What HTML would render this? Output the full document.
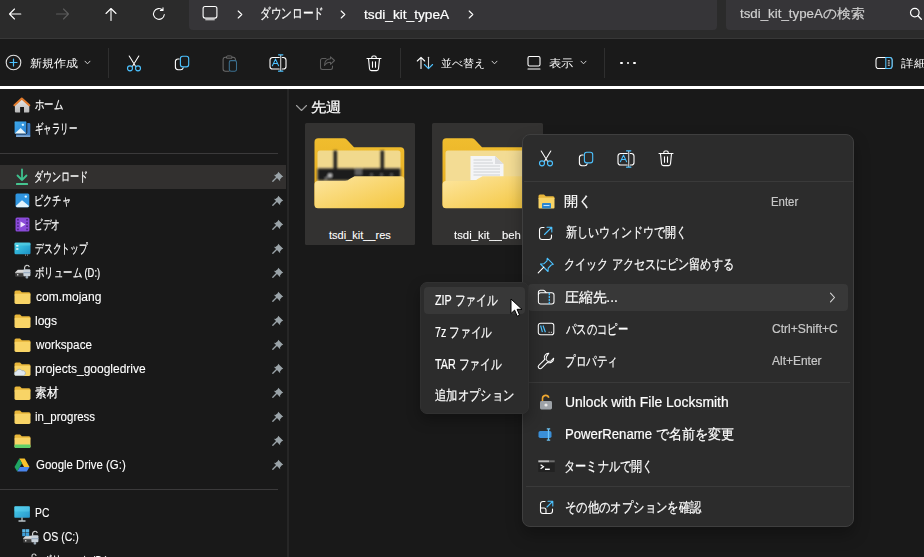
<!DOCTYPE html>
<html lang="ja"><head><meta charset="utf-8"><title>Explorer</title>
<style>
html,body{margin:0;padding:0;}
body{width:924px;height:557px;overflow:hidden;position:relative;background:#191919;font-family:"Liberation Sans",sans-serif;}
.b,.i,.t{position:absolute;}
.i{overflow:visible;}
.t{line-height:1;white-space:pre;transform-origin:0 0;}
</style></head><body>
<div class="b" style="left:0px;top:0px;width:924px;height:38px;background:#2b2b2b;"></div><div class="b" style="left:0px;top:38px;width:924px;height:1px;background:#383838;"></div><div class="b" style="left:188.5px;top:-6px;width:528px;height:36px;background:#363538;border-radius:4px"></div><div class="b" style="left:725.5px;top:-6px;width:220px;height:36px;background:#363538;border-radius:4px"></div><svg class="i" style="left:8px;top:7px;" width="14" height="14" viewBox="0 0 14 14"><path d="M12.8 7H1.5M6.5 2L1.5 7L6.5 12" stroke="#ffffff" stroke-width="1.1" fill="none" stroke-linecap="round" stroke-linejoin="round"/></svg><svg class="i" style="left:56px;top:7px;" width="14" height="14" viewBox="0 0 14 14"><path d="M0.5 7H12.5M7.5 2L12.5 7L7.5 12" stroke="#5c5c5c" stroke-width="1.1" fill="none" stroke-linecap="round" stroke-linejoin="round"/></svg><svg class="i" style="left:104px;top:7px;" width="14" height="14" viewBox="0 0 14 14"><path d="M7 13.5V1.5M2 6.5L7 1.5L12 6.5" stroke="#ffffff" stroke-width="1.1" fill="none" stroke-linecap="round" stroke-linejoin="round"/></svg><svg class="i" style="left:152px;top:7px;" width="14" height="14" viewBox="0 0 14 14"><path d="M12.3 7.5A5.4 5.4 0 1 1 10.6 3M11 0.8V3.4H8.4" stroke="#ffffff" stroke-width="1.1" fill="none" stroke-linecap="round" stroke-linejoin="round"/></svg><svg class="i" style="left:201px;top:5px;" width="18" height="17" viewBox="0 0 18 17"><rect x="2.1" y="1.5" width="13.8" height="11.6" rx="2" stroke="#ffffff" stroke-width="1.1" fill="none"/><path d="M4.3 14.2H13.7V15.3H4.3Z" fill="#ffffff" opacity="0.85"/></svg><svg class="i" style="left:237px;top:9.5px;" width="6" height="9" viewBox="0 0 6 9"><path d="M1.2 1L4.8 4.5L1.2 8" stroke="#ffffff" stroke-width="1.1" fill="none" stroke-linecap="round" stroke-linejoin="round"/></svg><svg class="i" style="left:339.5px;top:9.5px;" width="6" height="9" viewBox="0 0 6 9"><path d="M1.2 1L4.8 4.5L1.2 8" stroke="#ffffff" stroke-width="1.1" fill="none" stroke-linecap="round" stroke-linejoin="round"/></svg><svg class="i" style="left:467.5px;top:9.5px;" width="6" height="9" viewBox="0 0 6 9"><path d="M1.2 1L4.8 4.5L1.2 8" stroke="#ffffff" stroke-width="1.1" fill="none" stroke-linecap="round" stroke-linejoin="round"/></svg><svg class="i" style="left:909px;top:7px;" width="14" height="14" viewBox="0 0 14 14"><circle cx="5.8" cy="5.6" r="4.3" stroke="#ffffff" stroke-width="1.2" fill="none"/><path d="M8.9 8.8L12.3 12.2" stroke="#ffffff" stroke-width="1.3" fill="none" stroke-linecap="round" stroke-linejoin="round"/></svg><div class="b" style="left:0px;top:39px;width:924px;height:47px;background:#1a1a1a;"></div><div class="b" style="left:0px;top:86px;width:924px;height:3px;background:#ffffff;"></div><svg class="i" style="left:5px;top:54px;" width="17" height="17" viewBox="0 0 17 17"><circle cx="8.5" cy="8.5" r="7.3" stroke="#e0e0e0" stroke-width="1.1" fill="none"/><path d="M8.5 5V12M5 8.5H12" stroke="#4cc2ff" stroke-width="1.2" fill="none" stroke-linecap="round" stroke-linejoin="round"/></svg><svg class="i" style="left:83.5px;top:60.3px;" width="7" height="5" viewBox="0 0 7 5"><path d="M1 1.2L3.5 3.8L6 1.2" stroke="#cfcfcf" stroke-width="1" fill="none" stroke-linecap="round" stroke-linejoin="round"/></svg><svg class="i" style="left:491.0px;top:60.3px;" width="7" height="5" viewBox="0 0 7 5"><path d="M1 1.2L3.5 3.8L6 1.2" stroke="#cfcfcf" stroke-width="1" fill="none" stroke-linecap="round" stroke-linejoin="round"/></svg><svg class="i" style="left:579.5px;top:60.3px;" width="7" height="5" viewBox="0 0 7 5"><path d="M1 1.2L3.5 3.8L6 1.2" stroke="#cfcfcf" stroke-width="1" fill="none" stroke-linecap="round" stroke-linejoin="round"/></svg><div class="b" style="left:108px;top:48px;width:1px;height:30px;background:#2f2f2f;"></div><div class="b" style="left:400px;top:48px;width:1px;height:30px;background:#2f2f2f;"></div><div class="b" style="left:603.5px;top:48px;width:1px;height:30px;background:#2f2f2f;"></div><svg class="i" style="left:126px;top:55px;" width="16" height="17" viewBox="0 0 16 17"><path d="M3.2 1L9.5 11.3M12.8 1L6.5 11.3" stroke="#ffffff" stroke-width="1.05" fill="none" stroke-linecap="round" stroke-linejoin="round"/><circle cx="4" cy="13.3" r="2.5" stroke="#4cc2ff" stroke-width="1.15" fill="none"/><circle cx="12" cy="13.3" r="2.5" stroke="#4cc2ff" stroke-width="1.15" fill="none"/></svg><svg class="i" style="left:174px;top:54px;" width="16" height="17" viewBox="0 0 16 17"><path d="M5.2 5H4A2.6 2.6 0 0 0 1.4 7.6V13.1A2.6 2.6 0 0 0 4 15.7H6.8A2.5 2.5 0 0 0 9.2 13.9" stroke="#ffffff" stroke-width="1.1" fill="none" stroke-linecap="round" stroke-linejoin="round"/><rect x="6.4" y="2.2" width="8.3" height="10.7" rx="2.3" stroke="#4cc2ff" stroke-width="1.1" fill="none"/></svg><svg class="i" style="left:222px;top:54.5px;" width="16" height="18" viewBox="0 0 16 18"><path d="M4.5 2.2H3.3A2.2 2.2 0 0 0 1.1 4.4V14A2.2 2.2 0 0 0 3.3 16.2H7" stroke="#6a6a6a" stroke-width="1.05" fill="none" stroke-linecap="round" stroke-linejoin="round"/><path d="M4.5 3.2V2A1.2 1.2 0 0 1 5.7 0.9H8.8A1.2 1.2 0 0 1 10 2V3.2Z" stroke="#6a6a6a" stroke-width="1" fill="none"/><path d="M10 2.2H11.2A2.2 2.2 0 0 1 13.4 4.4V5.5" stroke="#6a6a6a" stroke-width="1.05" fill="none" stroke-linecap="round" stroke-linejoin="round"/><rect x="7.3" y="5.6" width="7.2" height="10.6" rx="1.6" stroke="#3b6f8f" stroke-width="1.05" fill="none"/></svg><svg class="i" style="left:269px;top:53px;" width="18" height="20" viewBox="0 0 18 20"><path d="M10.3 4.5H3.6A2.6 2.6 0 0 0 1 7.1V13.4A2.6 2.6 0 0 0 3.6 16H10.3M13.2 4.5H14.4A2.6 2.6 0 0 1 17 7.1V13.4A2.6 2.6 0 0 1 14.4 16H13.2" stroke="#ffffff" stroke-width="1.1" fill="none" stroke-linecap="round" stroke-linejoin="round"/><path d="M11.7 2V18" stroke="#d0d0d0" stroke-width="1.1"/><path d="M9.6 1.8H13.8M9.6 18.2H13.8" stroke="#4cc2ff" stroke-width="1.3" stroke-linecap="round"/><path d="M3.4 12.7L6.5 6.1L9.6 12.7M4.6 10.5H8.4" stroke="#4cc2ff" stroke-width="1.05" fill="none" stroke-linecap="round" stroke-linejoin="round"/></svg><svg class="i" style="left:318.5px;top:55px;" width="17" height="16" viewBox="0 0 17 16"><path d="M7 3.5H3.5A2 2 0 0 0 1.5 5.5V12.5A2 2 0 0 0 3.5 14.5H11.5A2 2 0 0 0 13.5 12.5V11" stroke="#5e5e5e" stroke-width="1.05" fill="none" stroke-linecap="round" stroke-linejoin="round"/><path d="M15.5 5.5L11.5 1.8V3.8C8 3.8 5.5 6 5.5 10.5C6.8 8.4 8.8 7.3 11.5 7.3V9.3Z" stroke="#5e5e5e" stroke-width="1.05" fill="none" stroke-linecap="round" stroke-linejoin="round"/></svg><svg class="i" style="left:366px;top:55px;" width="16" height="17" viewBox="0 0 16 17"><path d="M1 3.5H15M5.8 3.5V2.4A1.4 1.4 0 0 1 7.2 1H8.8A1.4 1.4 0 0 1 10.2 2.4V3.5" stroke="#ffffff" stroke-width="1.1" fill="none" stroke-linecap="round" stroke-linejoin="round"/><path d="M2.5 3.5L3.5 13.8A2 2 0 0 0 5.5 15.6H10.5A2 2 0 0 0 12.5 13.8L13.5 3.5" stroke="#ffffff" stroke-width="1.1" fill="none" stroke-linecap="round" stroke-linejoin="round"/><path d="M6.5 6.8V12.3M9.5 6.8V12.3" stroke="#ffffff" stroke-width="1.1" fill="none" stroke-linecap="round" stroke-linejoin="round"/></svg><svg class="i" style="left:416px;top:55px;" width="18" height="16" viewBox="0 0 18 16"><path d="M5 13.5V2.3M1.3 6L5 2.3L8.7 6" stroke="#ffffff" stroke-width="1.1" fill="none" stroke-linecap="round" stroke-linejoin="round"/><path d="M12.5 2.3V13.4" stroke="#d8d8d8" stroke-width="1.1" fill="none" stroke-linecap="round" stroke-linejoin="round"/><path d="M8.4 9.5L12.5 13.6L16.6 9.5" stroke="#4cc2ff" stroke-width="1.1" fill="none" stroke-linecap="round" stroke-linejoin="round"/></svg><svg class="i" style="left:527px;top:55px;" width="14" height="16" viewBox="0 0 14 16"><rect x="1" y="1.5" width="12" height="9.5" rx="1.5" stroke="#ffffff" stroke-width="1.1" fill="none"/><path d="M1 14H13" stroke="#ffffff" stroke-width="1.1" fill="none" stroke-linecap="round" stroke-linejoin="round"/></svg><div class="b" style="left:620.2px;top:61.900000000000006px;width:2.6px;height:2.6px;border-radius:50%;background:#fff"></div><div class="b" style="left:626.7px;top:61.900000000000006px;width:2.6px;height:2.6px;border-radius:50%;background:#fff"></div><div class="b" style="left:633.2px;top:61.900000000000006px;width:2.6px;height:2.6px;border-radius:50%;background:#fff"></div><svg class="i" style="left:875px;top:56px;" width="18" height="14" viewBox="0 0 18 14"><rect x="1" y="1.5" width="16" height="11" rx="2.5" stroke="#ffffff" stroke-width="1.05" fill="none"/><path d="M10.8 1.5H14.5A2.5 2.5 0 0 1 17 4V10A2.5 2.5 0 0 1 14.5 12.5H10.8Z" stroke="#4cc2ff" stroke-width="1.05" fill="#1b1b1b"/><path d="M12.8 4.8H14.8M12.8 7H14.8M12.8 9.2H14.8" stroke="#ffffff" stroke-width="0.9"/></svg><div class="b" style="left:287.4px;top:89px;width:2px;height:470px;background:#262626;"></div><div class="b" style="left:0px;top:153px;width:278px;height:1px;background:#3b3a3b;"></div><div class="b" style="left:0px;top:489px;width:278px;height:1px;background:#3b3a3b;"></div><div class="b" style="left:0px;top:165px;width:286px;height:24px;background:#32302f;"></div><svg class="i" style="left:13px;top:96px;" width="18" height="18" viewBox="0 0 18 18"><defs><linearGradient id="hg" x1="0" y1="0" x2="0" y2="1"><stop offset="0" stop-color="#e8e8e8"/><stop offset="1" stop-color="#b8b8b8"/></linearGradient></defs><path d="M1.9 9L8.8 2.8L16.3 9V15.6A1 1 0 0 1 15.3 16.6H11V11H7.1V16.6H2.9A1 1 0 0 1 1.9 15.6Z" fill="url(#hg)"/><path d="M1.4 9.3L8.8 2.6L16.3 9.3" stroke="#e27b2c" stroke-width="2" fill="none" stroke-linejoin="round" stroke-linecap="round"/></svg><svg class="i" style="left:13px;top:119px;" width="19" height="19" viewBox="0 0 19 19"><defs><linearGradient id="gg" x1="0" y1="0" x2="1" y2="1"><stop offset="0" stop-color="#3eaaea"/><stop offset="1" stop-color="#2a80d2"/></linearGradient></defs><rect x="3" y="3.9" width="14.3" height="14" rx="1.2" fill="#3a7cc4"/><rect x="3" y="16.3" width="14.3" height="1.6" rx="0.6" fill="#7fa6cf"/><rect x="1.1" y="2" width="12.7" height="12.9" rx="1.2" fill="url(#gg)" stroke="#141414" stroke-width="0.9"/><path d="M1.8 14.5L7.6 9.1L13.2 14.5Z" fill="#e6f4fb"/><rect x="8.9" y="4.8" width="2" height="2" rx="0.5" fill="#dff8ff"/></svg><svg class="i" style="left:15px;top:168px;" width="14" height="18" viewBox="0 0 14 18"><path d="M7 1.5V11.8M2.5 7.5L7 12L11.5 7.5" stroke="#3ec28f" stroke-width="1.8" fill="none" stroke-linecap="round" stroke-linejoin="round"/><rect x="1" y="15" width="12" height="2" rx="0.6" fill="#46c490"/></svg><svg class="i" style="left:14.5px;top:193.3px;" width="15" height="15" viewBox="0 0 15 15"><rect x="0.5" y="0.5" width="13.8" height="13.8" rx="1.5" fill="#2f95e0"/><path d="M1 12.8L7 7.2L13.8 12.8V13A1.3 1.3 0 0 1 12.5 14.3H2.3A1.3 1.3 0 0 1 1 13Z" fill="#e2f3fc"/><circle cx="10.8" cy="3.6" r="1.2" fill="#e2f3fc"/></svg><svg class="i" style="left:14.5px;top:216.8px;" width="15" height="15" viewBox="0 0 15 15"><rect x="0.5" y="0.5" width="14" height="14" rx="1.5" fill="#8a4ad8"/><rect x="2.3" y="2" width="1.3" height="1.6" fill="#3b1d6e"/><rect x="2.3" y="5.2" width="1.3" height="1.6" fill="#3b1d6e"/><rect x="2.3" y="8.4" width="1.3" height="1.6" fill="#3b1d6e"/><rect x="2.3" y="11.6" width="1.3" height="1.6" fill="#3b1d6e"/><rect x="11.4" y="2" width="1.3" height="1.6" fill="#3b1d6e"/><rect x="11.4" y="5.2" width="1.3" height="1.6" fill="#3b1d6e"/><rect x="11.4" y="8.4" width="1.3" height="1.6" fill="#3b1d6e"/><rect x="11.4" y="11.6" width="1.3" height="1.6" fill="#3b1d6e"/><path d="M5.5 4.5L10.5 7.5L5.5 10.5Z" fill="#f1e6ff"/></svg><svg class="i" style="left:13.5px;top:242px;" width="17" height="14" viewBox="0 0 17 14"><defs><linearGradient id="dg" x1="0" y1="0" x2="1" y2="1"><stop offset="0" stop-color="#45d3ea"/><stop offset="1" stop-color="#1a8fc4"/></linearGradient></defs><rect x="0.5" y="0.8" width="16" height="11.5" rx="1.3" fill="url(#dg)"/><rect x="0.5" y="0.5" width="16" height="3" rx="1.2" fill="#5ad0e2" opacity="0.6"/><rect x="2.2" y="3" width="2.2" height="1.6" fill="#e8fbff"/><rect x="2.2" y="6.2" width="2.2" height="1.6" fill="#e8fbff"/><rect x="11" y="12.6" width="1" height="1" fill="#aaa"/><rect x="13" y="12.6" width="1" height="1" fill="#aaa"/></svg><svg class="i" style="left:14px;top:264px;" width="17" height="16" viewBox="0 0 17 16"><path d="M1.2 8.2L3.8 5.8H11V8.2Z" fill="#d9d9d9"/><rect x="1.2" y="8" width="9.8" height="4.8" rx="0.8" fill="#3c3c3c"/><rect x="1.2" y="8" width="9.8" height="1.2" fill="#bdbdbd"/><rect x="3" y="10.2" width="1.4" height="1.2" fill="#f0f0f0"/><path d="M10.6 5.6V3.6A2.4 2.4 0 0 1 15.3 3" stroke="#d4d4d4" stroke-width="1.2" fill="none"/><rect x="9.4" y="5.2" width="7" height="7" rx="1" fill="#c9d1d9"/><rect x="9.4" y="8.2" width="7" height="1" fill="#8fa6bd"/><rect x="11.6" y="12" width="2.6" height="2.6" rx="0.8" fill="#9aa8b5"/></svg><svg class="i" style="left:13.5px;top:289.5px;" width="17" height="15" viewBox="0 0 17 15"><path d="M0.5 2A1.5 1.5 0 0 1 2 0.5H6L7.8 2.3H15A1.5 1.5 0 0 1 16.5 3.8V5H0.5Z" fill="#e8b63a"/><rect x="0.5" y="3.8" width="16" height="10.2" rx="1.4" fill="#f8d466"/></svg><svg class="i" style="left:13.5px;top:313.5px;" width="17" height="15" viewBox="0 0 17 15"><path d="M0.5 2A1.5 1.5 0 0 1 2 0.5H6L7.8 2.3H15A1.5 1.5 0 0 1 16.5 3.8V5H0.5Z" fill="#e8b63a"/><rect x="0.5" y="3.8" width="16" height="10.2" rx="1.4" fill="#f8d466"/></svg><svg class="i" style="left:13.5px;top:337.5px;" width="17" height="15" viewBox="0 0 17 15"><path d="M0.5 2A1.5 1.5 0 0 1 2 0.5H6L7.8 2.3H15A1.5 1.5 0 0 1 16.5 3.8V5H0.5Z" fill="#e8b63a"/><rect x="0.5" y="3.8" width="16" height="10.2" rx="1.4" fill="#f8d466"/></svg><svg class="i" style="left:13.5px;top:361.5px;" width="17" height="15" viewBox="0 0 17 15"><path d="M0.5 2A1.5 1.5 0 0 1 2 0.5H6L7.8 2.3H15A1.5 1.5 0 0 1 16.5 3.8V5H0.5Z" fill="#e8b63a"/><rect x="0.5" y="3.8" width="16" height="10.2" rx="1.4" fill="#f8d466"/><path d="M1.5 13.5A2.3 2.3 0 0 1 2.5 9.2A3 3 0 0 1 8 8.8A2.4 2.4 0 0 1 9.8 13.5Z" fill="#dfe7ee" stroke="#8aa0b5" stroke-width="0.6"/></svg><svg class="i" style="left:13.5px;top:385.5px;" width="17" height="15" viewBox="0 0 17 15"><path d="M0.5 2A1.5 1.5 0 0 1 2 0.5H6L7.8 2.3H15A1.5 1.5 0 0 1 16.5 3.8V5H0.5Z" fill="#e8b63a"/><rect x="0.5" y="3.8" width="16" height="10.2" rx="1.4" fill="#f8d466"/></svg><svg class="i" style="left:13.5px;top:409.5px;" width="17" height="15" viewBox="0 0 17 15"><path d="M0.5 2A1.5 1.5 0 0 1 2 0.5H6L7.8 2.3H15A1.5 1.5 0 0 1 16.5 3.8V5H0.5Z" fill="#e8b63a"/><rect x="0.5" y="3.8" width="16" height="10.2" rx="1.4" fill="#f8d466"/></svg><svg class="i" style="left:13.5px;top:433.5px;" width="17" height="15" viewBox="0 0 17 15"><path d="M0.5 2A1.5 1.5 0 0 1 2 0.5H6L7.8 2.3H15A1.5 1.5 0 0 1 16.5 3.8V5H0.5Z" fill="#e8b63a"/><rect x="0.5" y="3.8" width="16" height="10.2" rx="1.4" fill="#f8d466"/><rect x="0.5" y="10.5" width="16" height="3.5" rx="1.2" fill="#5fcf6a"/></svg><svg class="i" style="left:14px;top:458px;" width="16" height="14" viewBox="0 0 16 14"><path d="M5.3 0.5H10.7L15.5 9H10.1Z" fill="#f8c22c"/><path d="M5.3 0.5L0.5 9L3.2 13.5L8 5.3Z" fill="#1fa463"/><path d="M3.2 13.5H12.8L15.5 9H5.9Z" fill="#4a85ec"/></svg><svg class="i" style="left:272px;top:170.8px;" width="12" height="11" viewBox="0 0 12 11"><path d="M6.2 0.8L11.2 5.8L9.8 6.3L8 8.6L8.2 10.2L1.8 3.8L3.4 4L5.7 2.2Z" fill="#9aa3a8"/><path d="M4.8 6.2L0.8 10.2" stroke="#9aa3a8" stroke-width="1.3" stroke-linecap="round"/></svg><svg class="i" style="left:272px;top:194.8px;" width="12" height="11" viewBox="0 0 12 11"><path d="M6.2 0.8L11.2 5.8L9.8 6.3L8 8.6L8.2 10.2L1.8 3.8L3.4 4L5.7 2.2Z" fill="#9aa3a8"/><path d="M4.8 6.2L0.8 10.2" stroke="#9aa3a8" stroke-width="1.3" stroke-linecap="round"/></svg><svg class="i" style="left:272px;top:218.8px;" width="12" height="11" viewBox="0 0 12 11"><path d="M6.2 0.8L11.2 5.8L9.8 6.3L8 8.6L8.2 10.2L1.8 3.8L3.4 4L5.7 2.2Z" fill="#9aa3a8"/><path d="M4.8 6.2L0.8 10.2" stroke="#9aa3a8" stroke-width="1.3" stroke-linecap="round"/></svg><svg class="i" style="left:272px;top:242.8px;" width="12" height="11" viewBox="0 0 12 11"><path d="M6.2 0.8L11.2 5.8L9.8 6.3L8 8.6L8.2 10.2L1.8 3.8L3.4 4L5.7 2.2Z" fill="#9aa3a8"/><path d="M4.8 6.2L0.8 10.2" stroke="#9aa3a8" stroke-width="1.3" stroke-linecap="round"/></svg><svg class="i" style="left:272px;top:266.8px;" width="12" height="11" viewBox="0 0 12 11"><path d="M6.2 0.8L11.2 5.8L9.8 6.3L8 8.6L8.2 10.2L1.8 3.8L3.4 4L5.7 2.2Z" fill="#9aa3a8"/><path d="M4.8 6.2L0.8 10.2" stroke="#9aa3a8" stroke-width="1.3" stroke-linecap="round"/></svg><svg class="i" style="left:272px;top:290.8px;" width="12" height="11" viewBox="0 0 12 11"><path d="M6.2 0.8L11.2 5.8L9.8 6.3L8 8.6L8.2 10.2L1.8 3.8L3.4 4L5.7 2.2Z" fill="#9aa3a8"/><path d="M4.8 6.2L0.8 10.2" stroke="#9aa3a8" stroke-width="1.3" stroke-linecap="round"/></svg><svg class="i" style="left:272px;top:314.8px;" width="12" height="11" viewBox="0 0 12 11"><path d="M6.2 0.8L11.2 5.8L9.8 6.3L8 8.6L8.2 10.2L1.8 3.8L3.4 4L5.7 2.2Z" fill="#9aa3a8"/><path d="M4.8 6.2L0.8 10.2" stroke="#9aa3a8" stroke-width="1.3" stroke-linecap="round"/></svg><svg class="i" style="left:272px;top:338.8px;" width="12" height="11" viewBox="0 0 12 11"><path d="M6.2 0.8L11.2 5.8L9.8 6.3L8 8.6L8.2 10.2L1.8 3.8L3.4 4L5.7 2.2Z" fill="#9aa3a8"/><path d="M4.8 6.2L0.8 10.2" stroke="#9aa3a8" stroke-width="1.3" stroke-linecap="round"/></svg><svg class="i" style="left:272px;top:362.8px;" width="12" height="11" viewBox="0 0 12 11"><path d="M6.2 0.8L11.2 5.8L9.8 6.3L8 8.6L8.2 10.2L1.8 3.8L3.4 4L5.7 2.2Z" fill="#9aa3a8"/><path d="M4.8 6.2L0.8 10.2" stroke="#9aa3a8" stroke-width="1.3" stroke-linecap="round"/></svg><svg class="i" style="left:272px;top:386.8px;" width="12" height="11" viewBox="0 0 12 11"><path d="M6.2 0.8L11.2 5.8L9.8 6.3L8 8.6L8.2 10.2L1.8 3.8L3.4 4L5.7 2.2Z" fill="#9aa3a8"/><path d="M4.8 6.2L0.8 10.2" stroke="#9aa3a8" stroke-width="1.3" stroke-linecap="round"/></svg><svg class="i" style="left:272px;top:410.8px;" width="12" height="11" viewBox="0 0 12 11"><path d="M6.2 0.8L11.2 5.8L9.8 6.3L8 8.6L8.2 10.2L1.8 3.8L3.4 4L5.7 2.2Z" fill="#9aa3a8"/><path d="M4.8 6.2L0.8 10.2" stroke="#9aa3a8" stroke-width="1.3" stroke-linecap="round"/></svg><svg class="i" style="left:272px;top:434.8px;" width="12" height="11" viewBox="0 0 12 11"><path d="M6.2 0.8L11.2 5.8L9.8 6.3L8 8.6L8.2 10.2L1.8 3.8L3.4 4L5.7 2.2Z" fill="#9aa3a8"/><path d="M4.8 6.2L0.8 10.2" stroke="#9aa3a8" stroke-width="1.3" stroke-linecap="round"/></svg><svg class="i" style="left:272px;top:458.8px;" width="12" height="11" viewBox="0 0 12 11"><path d="M6.2 0.8L11.2 5.8L9.8 6.3L8 8.6L8.2 10.2L1.8 3.8L3.4 4L5.7 2.2Z" fill="#9aa3a8"/><path d="M4.8 6.2L0.8 10.2" stroke="#9aa3a8" stroke-width="1.3" stroke-linecap="round"/></svg><svg class="i" style="left:14px;top:505.8px;" width="16" height="17" viewBox="0 0 16 17"><defs><linearGradient id="pg" x1="0" y1="0" x2="1" y2="1"><stop offset="0" stop-color="#48d0ea"/><stop offset="1" stop-color="#2a96cc"/></linearGradient></defs><rect x="0.3" y="0.3" width="15.6" height="11.5" rx="0.8" fill="url(#pg)"/><rect x="0.5" y="0.5" width="15" height="5" rx="1" fill="#5fd0ef" opacity="0.5"/><path d="M8 11.5V14.5M4.5 15H11.5" stroke="#b9c4c9" stroke-width="1.3"/></svg><svg class="i" style="left:22px;top:529.5px;" width="17" height="16" viewBox="0 0 17 16"><path d="M1.2 8.2L3.8 5.8H11V8.2Z" fill="#d9d9d9"/><rect x="1.2" y="8" width="9.8" height="4.8" rx="0.8" fill="#3c3c3c"/><rect x="1.2" y="8" width="9.8" height="1.2" fill="#bdbdbd"/><rect x="3" y="10.2" width="1.4" height="1.2" fill="#f0f0f0"/><path d="M10.6 5.6V3.6A2.4 2.4 0 0 1 15.3 3" stroke="#d4d4d4" stroke-width="1.2" fill="none"/><rect x="9.4" y="5.2" width="7" height="7" rx="1" fill="#c9d1d9"/><rect x="9.4" y="8.2" width="7" height="1" fill="#8fa6bd"/><rect x="11.6" y="12" width="2.6" height="2.6" rx="0.8" fill="#9aa8b5"/></svg><svg class="i" style="left:22px;top:528.5px;" width="8" height="8" viewBox="0 0 8 8"><rect x="0.2" y="0.2" width="3.3" height="3.3" fill="#5ab8ea"/><rect x="3.9" y="0.2" width="3.3" height="3.3" fill="#5ab8ea"/><rect x="0.2" y="3.9" width="3.3" height="3.3" fill="#3f9fd8"/><rect x="3.9" y="3.9" width="3.3" height="3.3" fill="#3f9fd8"/></svg><svg class="i" style="left:29px;top:553px;" width="10" height="6" viewBox="0 0 10 6"><path d="M3 6V3A2 2 0 0 1 7 3" stroke="#cfcfcf" stroke-width="1.1" fill="none"/></svg><svg class="i" style="left:295px;top:104px;" width="13" height="8" viewBox="0 0 13 8"><path d="M1.5 1.5L6.5 6.5L11.5 1.5" stroke="#a0a0a0" stroke-width="1.1" fill="none" stroke-linecap="round" stroke-linejoin="round"/></svg><div class="b" style="left:304.5px;top:123px;width:110.5px;height:121.5px;background:#333231;border-radius:1.5px"></div><div class="b" style="left:432px;top:123px;width:110.5px;height:121.5px;background:#333231;border-radius:1.5px"></div><svg class="i" style="left:314px;top:138px;" width="91" height="71" viewBox="0 0 91 71"><defs><linearGradient id="ff" x1="0" y1="0" x2="1" y2="1"><stop offset="0" stop-color="#fde6a0"/><stop offset="1" stop-color="#f4c63e"/></linearGradient><linearGradient id="fb" x1="0" y1="0" x2="0" y2="1"><stop offset="0" stop-color="#f0bd2e"/><stop offset="1" stop-color="#e3a91f"/></linearGradient></defs><path d="M0.5 4A3.8 3.8 0 0 1 4.3 0.3H29.5A4.5 4.5 0 0 1 32.7 1.6L40 9.3H86.5A3.8 3.8 0 0 1 90.3 13.1V66A4 4 0 0 1 86.3 70H4.5A4 4 0 0 1 0.5 66Z" fill="url(#fb)"/><defs><filter id="bl" x="-10%" y="-10%" width="120%" height="120%"><feGaussianBlur stdDeviation="1.0"/></filter></defs><rect x="3.5" y="12.5" width="83" height="35" rx="2.5" fill="#f1d98d"/><g filter="url(#bl)"><rect x="3.5" y="30.5" width="83" height="12" fill="#1c1c1e"/><rect x="19.5" y="12.5" width="3.5" height="20" fill="#1e1e1e"/><rect x="66.5" y="12.5" width="3.5" height="20" fill="#1e1e1e"/><rect x="41" y="30" width="7" height="7" fill="#7a7a7a" opacity="0.7"/><circle cx="16" cy="37.4" r="2" fill="#ccc"/><path d="M11 41L15 38" stroke="#999" stroke-width="1.2"/><circle cx="57.5" cy="36.7" r="1.3" fill="#666"/><circle cx="67.5" cy="36.7" r="1.3" fill="#666"/><circle cx="77.5" cy="36.7" r="1.3" fill="#666"/></g><path d="M0.5 46.5A3.5 3.5 0 0 1 4 43H31A6 6 0 0 0 35.5 41L40.5 38.3H86.8A3.5 3.5 0 0 1 90.3 41.8V66.5A3.5 3.5 0 0 1 86.8 70.3H4A3.5 3.5 0 0 1 0.5 66.8Z" fill="url(#ff)"/></svg><svg class="i" style="left:442px;top:138px;" width="91" height="71" viewBox="0 0 91 71"><defs><linearGradient id="ff" x1="0" y1="0" x2="1" y2="1"><stop offset="0" stop-color="#fde6a0"/><stop offset="1" stop-color="#f4c63e"/></linearGradient><linearGradient id="fb" x1="0" y1="0" x2="0" y2="1"><stop offset="0" stop-color="#f0bd2e"/><stop offset="1" stop-color="#e3a91f"/></linearGradient></defs><path d="M0.5 4A3.8 3.8 0 0 1 4.3 0.3H29.5A4.5 4.5 0 0 1 32.7 1.6L40 9.3H86.5A3.8 3.8 0 0 1 90.3 13.1V66A4 4 0 0 1 86.3 70H4.5A4 4 0 0 1 0.5 66Z" fill="url(#fb)"/><rect x="3.5" y="12.5" width="83" height="35" rx="2.5" fill="#f3dc94"/><path d="M28.5 18H53L61.5 26V42H28.5Z" fill="#f4f5f7"/><path d="M53 18V26H61.5" fill="#dcdde0"/><path d="M31.5 22H50M31.5 25H51M31.5 28H58M31.5 31H58M31.5 34H58M31.5 37H58" stroke="#c5c8cc" stroke-width="0.8"/><path d="M0.5 46.5A3.5 3.5 0 0 1 4 43H31A6 6 0 0 0 35.5 41L40.5 38.3H86.8A3.5 3.5 0 0 1 90.3 41.8V66.5A3.5 3.5 0 0 1 86.8 70.3H4A3.5 3.5 0 0 1 0.5 66.8Z" fill="url(#ff)"/></svg>
<div class="t" style="left:260.48px;top:6.00px;font-size:14px;color:#ffffff;-webkit-text-stroke:0.2px #ffffff;transform:scaleX(0.7625)">ダウンロード</div><div class="t" style="left:364.00px;top:8.50px;font-size:12px;color:#ffffff;-webkit-text-stroke:0.2px #ffffff;transform:scaleX(1.1400)">tsdi_kit_typeA</div><div class="t" style="left:740.00px;top:8.00px;font-size:12.5px;color:#cfcfcf;-webkit-text-stroke:0.2px #cfcfcf;transform:scaleX(1.0647)">tsdi_kit_typeAの検索</div><div class="t" style="left:30.00px;top:58.30px;font-size:11px;color:#ffffff;-webkit-text-stroke:0px #ffffff;transform:scaleX(1.0909)">新規作成</div><div class="t" style="left:441.30px;top:58.30px;font-size:11px;color:#ffffff;-webkit-text-stroke:0px #ffffff;transform:scaleX(0.9930)">並べ替え</div><div class="t" style="left:549.28px;top:58.30px;font-size:11px;color:#ffffff;-webkit-text-stroke:0px #ffffff;transform:scaleX(1.1238)">表示</div><div class="t" style="left:900.70px;top:58.30px;font-size:11px;color:#ffffff;-webkit-text-stroke:0px #ffffff;transform:scaleX(1.1429)">詳細</div><div class="t" style="left:35.08px;top:97.50px;font-size:13px;color:#ffffff;-webkit-text-stroke:0.2px #ffffff;transform:scaleX(0.7216)">ホーム</div><div class="t" style="left:35.15px;top:121.50px;font-size:13px;color:#ffffff;-webkit-text-stroke:0.2px #ffffff;transform:scaleX(0.6508)">ギャラリー</div><div class="t" style="left:34.40px;top:169.50px;font-size:13px;color:#ffffff;-webkit-text-stroke:0.2px #ffffff;transform:scaleX(0.6986)">ダウンロード</div><div class="t" style="left:34.38px;top:193.50px;font-size:13px;color:#ffffff;-webkit-text-stroke:0.2px #ffffff;transform:scaleX(0.7104)">ピクチャ</div><div class="t" style="left:34.47px;top:217.50px;font-size:13px;color:#ffffff;-webkit-text-stroke:0.2px #ffffff;transform:scaleX(0.6639)">ビデオ</div><div class="t" style="left:35.13px;top:241.50px;font-size:13px;color:#ffffff;-webkit-text-stroke:0.2px #ffffff;transform:scaleX(0.6740)">デスクトップ</div><div class="t" style="left:35.08px;top:265.50px;font-size:13px;color:#ffffff;-webkit-text-stroke:0.2px #ffffff;transform:scaleX(0.7213)">ボリューム (D:)</div><div class="t" style="left:35.80px;top:291.10px;font-size:12.5px;color:#ffffff;-webkit-text-stroke:0.1px #ffffff;transform:scaleX(0.9603)">com.mojang</div><div class="t" style="left:34.84px;top:315.10px;font-size:12.5px;color:#ffffff;-webkit-text-stroke:0.1px #ffffff;transform:scaleX(0.9636)">logs</div><div class="t" style="left:35.80px;top:339.10px;font-size:12.5px;color:#ffffff;-webkit-text-stroke:0.1px #ffffff;transform:scaleX(0.9373)">workspace</div><div class="t" style="left:34.84px;top:363.10px;font-size:12.5px;color:#ffffff;-webkit-text-stroke:0.1px #ffffff;transform:scaleX(0.9596)">projects_googledrive</div><div class="t" style="left:34.91px;top:385.50px;font-size:13px;color:#ffffff;-webkit-text-stroke:0.2px #ffffff;transform:scaleX(0.8920)">素材</div><div class="t" style="left:34.88px;top:411.10px;font-size:12.5px;color:#ffffff;-webkit-text-stroke:0.1px #ffffff;transform:scaleX(0.9203)">in_progress</div><div class="t" style="left:35.80px;top:459.10px;font-size:12.5px;color:#ffffff;-webkit-text-stroke:0.1px #ffffff;transform:scaleX(0.9165)">Google Drive (G:)</div><div class="t" style="left:34.97px;top:507.10px;font-size:12.5px;color:#ffffff;-webkit-text-stroke:0.1px #ffffff;transform:scaleX(0.8250)">PC</div><div class="t" style="left:43.20px;top:531.10px;font-size:12.5px;color:#ffffff;-webkit-text-stroke:0.1px #ffffff;transform:scaleX(0.8452)">OS (C:)</div><div class="t" style="left:43.28px;top:553.50px;font-size:13px;color:#ffffff;-webkit-text-stroke:0.2px #ffffff;transform:scaleX(0.7191)">ボリューム (D:)</div><div class="t" style="left:310.70px;top:100.00px;font-size:14px;color:#ffffff;-webkit-text-stroke:0.2px #ffffff;transform:scaleX(1.0962)">先週</div><div class="t" style="left:329.00px;top:229.80px;font-size:11px;color:#ffffff;-webkit-text-stroke:0.1px #ffffff;transform:scaleX(1.0000)">tsdi_kit__res</div><div class="t" style="left:454.00px;top:229.80px;font-size:11px;color:#ffffff;-webkit-text-stroke:0.1px #ffffff;transform:scaleX(1.0312)">tsdi_kit__beh</div>
<div class="b" style="left:522.3px;top:134px;width:329.7px;height:391px;background:#2c2c2c;border:1px solid #3f3f3f;border-radius:8px;box-shadow:0 8px 16px rgba(0,0,0,0.28)"></div><div class="b" style="left:524px;top:181px;width:329px;height:1px;background:#3a3a3a;"></div><div class="b" style="left:526px;top:381.5px;width:324px;height:1px;background:#3a3a3a;"></div><div class="b" style="left:526px;top:486px;width:324px;height:1px;background:#3a3a3a;"></div><div class="b" style="left:528px;top:283.5px;width:320px;height:27.5px;background:#383838;border-radius:4px"></div><svg class="i" style="left:538px;top:150px;" width="16" height="17" viewBox="0 0 16 17"><path d="M3.2 1L9.5 11.3M12.8 1L6.5 11.3" stroke="#ffffff" stroke-width="1.05" fill="none" stroke-linecap="round" stroke-linejoin="round"/><circle cx="4" cy="13.3" r="2.5" stroke="#4cc2ff" stroke-width="1.15" fill="none"/><circle cx="12" cy="13.3" r="2.5" stroke="#4cc2ff" stroke-width="1.15" fill="none"/></svg><svg class="i" style="left:577.5px;top:149.5px;" width="16" height="17" viewBox="0 0 16 17"><path d="M5.2 5H4A2.6 2.6 0 0 0 1.4 7.6V13.1A2.6 2.6 0 0 0 4 15.7H6.8A2.5 2.5 0 0 0 9.2 13.9" stroke="#ffffff" stroke-width="1.1" fill="none" stroke-linecap="round" stroke-linejoin="round"/><rect x="6.4" y="2.2" width="8.3" height="10.7" rx="2.3" stroke="#4cc2ff" stroke-width="1.1" fill="none"/></svg><svg class="i" style="left:617px;top:148.5px;" width="18" height="20" viewBox="0 0 18 20"><path d="M10.3 4.5H3.6A2.6 2.6 0 0 0 1 7.1V13.4A2.6 2.6 0 0 0 3.6 16H10.3M13.2 4.5H14.4A2.6 2.6 0 0 1 17 7.1V13.4A2.6 2.6 0 0 1 14.4 16H13.2" stroke="#ffffff" stroke-width="1.1" fill="none" stroke-linecap="round" stroke-linejoin="round"/><path d="M11.7 2V18" stroke="#d0d0d0" stroke-width="1.1"/><path d="M9.6 1.8H13.8M9.6 18.2H13.8" stroke="#4cc2ff" stroke-width="1.3" stroke-linecap="round"/><path d="M3.4 12.7L6.5 6.1L9.6 12.7M4.6 10.5H8.4" stroke="#4cc2ff" stroke-width="1.05" fill="none" stroke-linecap="round" stroke-linejoin="round"/></svg><svg class="i" style="left:658px;top:149.5px;" width="16" height="17" viewBox="0 0 16 17"><path d="M1 3.5H15M5.8 3.5V2.4A1.4 1.4 0 0 1 7.2 1H8.8A1.4 1.4 0 0 1 10.2 2.4V3.5" stroke="#ffffff" stroke-width="1.1" fill="none" stroke-linecap="round" stroke-linejoin="round"/><path d="M2.5 3.5L3.5 13.8A2 2 0 0 0 5.5 15.6H10.5A2 2 0 0 0 12.5 13.8L13.5 3.5" stroke="#ffffff" stroke-width="1.1" fill="none" stroke-linecap="round" stroke-linejoin="round"/><path d="M6.5 6.8V12.3M9.5 6.8V12.3" stroke="#ffffff" stroke-width="1.1" fill="none" stroke-linecap="round" stroke-linejoin="round"/></svg><svg class="i" style="left:537.5px;top:193.5px;" width="17" height="15" viewBox="0 0 17 15"><path d="M0.5 2A1.5 1.5 0 0 1 2 0.5H6L7.8 2.3H15A1.5 1.5 0 0 1 16.5 3.8V5H0.5Z" fill="#e8b63a"/><rect x="0.5" y="3.8" width="16" height="10.7" rx="1" fill="#f8d466"/><rect x="4" y="9" width="9" height="5.5" rx="1" fill="#2a86d1"/><rect x="5.5" y="11" width="6" height="1" fill="#bfe3ff"/></svg><svg class="i" style="left:537.6px;top:225.5px;" width="15" height="15" viewBox="0 0 15 15"><path d="M6 1.5H4A2.5 2.5 0 0 0 1.5 4V11A2.5 2.5 0 0 0 4 13.5H11A2.5 2.5 0 0 0 13.5 11V9" stroke="#ffffff" stroke-width="1.1" fill="none" stroke-linecap="round" stroke-linejoin="round"/><path d="M9 1.2H13.8V6M13.5 1.5L6.5 8.5" stroke="#4cc2ff" stroke-width="1.1" fill="none" stroke-linecap="round" stroke-linejoin="round"/></svg><svg class="i" style="left:537px;top:256.5px;" width="18" height="17" viewBox="0 0 18 17"><path d="M10.2 1.2L16.3 7.3L14.2 8L11.2 11.2L11 14.5L3.5 7L6.8 6.8L10 3.8Z" stroke="#4cc2ff" stroke-width="1.1" fill="none" stroke-linejoin="round"/><path d="M6.8 10.2L1.2 15.8" stroke="#ffffff" stroke-width="1.1" stroke-linecap="round"/></svg><svg class="i" style="left:537px;top:289px;" width="18" height="16" viewBox="0 0 18 16"><rect x="1.4" y="3.8" width="15.6" height="11.2" rx="2.2" stroke="#ffffff" stroke-width="1.05" fill="none"/><path d="M1.4 6V3.2A2 2 0 0 1 3.4 1.2H6.4A1.6 1.6 0 0 1 7.6 1.8L9.4 3.8" stroke="#ffffff" stroke-width="1.05" fill="none" stroke-linejoin="round"/><path d="M12.3 3.8V15" stroke="#4cc2ff" stroke-width="1.3" stroke-dasharray="2.2 0.8"/></svg><svg class="i" style="left:829px;top:292px;" width="7" height="11" viewBox="0 0 7 11"><path d="M1.5 1.2L5.5 5.5L1.5 9.8" stroke="#d8d8d8" stroke-width="1.1" fill="none" stroke-linecap="round" stroke-linejoin="round"/></svg><svg class="i" style="left:537px;top:321px;" width="18" height="15" viewBox="0 0 18 15"><rect x="1.3" y="2.3" width="15.5" height="11.5" rx="2.3" stroke="#ffffff" stroke-width="1.05" fill="none"/><path d="M3.6 4.5L5.4 11.2M6 4.5L8.4 11.2" stroke="#4cc2ff" stroke-width="1.15"/><path d="M11.6 11.3H12.6M13.9 11.3H14.9" stroke="#bbbbbb" stroke-width="1.2"/></svg><svg class="i" style="left:537px;top:351.5px;" width="18" height="18" viewBox="0 0 18 18"><path d="M11.8 1.3A4.5 4.5 0 0 0 7.6 7.6L1.8 13.4A1.9 1.9 0 0 0 4.6 16.2L10.4 10.4A4.5 4.5 0 0 0 16.7 6.2L13.9 9L11 9.5L9 7.5L9.5 4.6Z" stroke="#ffffff" stroke-width="1.05" fill="none" stroke-linejoin="round"/></svg><svg class="i" style="left:539px;top:393.5px;" width="14" height="16" viewBox="0 0 14 16"><path d="M3.5 7V4.5A3.2 3.2 0 0 1 9.8 3.8" stroke="#f0a830" stroke-width="1.6" fill="none"/><rect x="1" y="7" width="12" height="8.5" rx="1.4" fill="#9ea3a8"/><circle cx="7" cy="11" r="1.6" fill="#e8e8e8"/></svg><svg class="i" style="left:538px;top:427.5px;" width="16" height="13" viewBox="0 0 16 13"><rect x="0.5" y="3" width="13" height="7" rx="1.8" fill="#3a8fd8"/><path d="M10.5 0.8V12.2M8.8 0.8H12.2M8.8 12.2H12.2" stroke="#6cc3f5" stroke-width="1.3"/></svg><svg class="i" style="left:537.5px;top:459.5px;" width="17" height="12.5" viewBox="0 0 17 12.5"><rect x="0.3" y="0.3" width="16.4" height="11.7" fill="#222222"/><rect x="0.3" y="0.3" width="11" height="2" fill="#bdbdbd"/><rect x="11.3" y="0.3" width="5.4" height="2" fill="#6e6e6e"/><path d="M2.6 4.8L5.5 6.8L2.6 8.8" stroke="#fff" stroke-width="1.2" fill="none"/><path d="M7 9.3H11.8" stroke="#fff" stroke-width="1.4"/></svg><svg class="i" style="left:538.5px;top:499.5px;" width="15" height="15" viewBox="0 0 15 15"><path d="M6 1.5H4A2.5 2.5 0 0 0 1.5 4V11A2.5 2.5 0 0 0 4 13.5H11A2.5 2.5 0 0 0 13.5 11V9" stroke="#ffffff" stroke-width="1.1" fill="none" stroke-linecap="round" stroke-linejoin="round"/><path d="M1.5 8H5A2 2 0 0 1 7 10V13.5" stroke="#ffffff" stroke-width="1.1" fill="none" stroke-linecap="round" stroke-linejoin="round"/><path d="M9 1.2H13.8V6M13.5 1.5L8 7" stroke="#4cc2ff" stroke-width="1.1" fill="none" stroke-linecap="round" stroke-linejoin="round"/></svg>
<div class="t" style="left:564.49px;top:193.50px;font-size:14px;color:#ffffff;-webkit-text-stroke:0.2px #ffffff;transform:scaleX(1.0136)">開く</div><div class="t" style="left:565.50px;top:225.30px;font-size:14px;color:#ffffff;-webkit-text-stroke:0.2px #ffffff;transform:scaleX(0.7886)">新しいウィンドウで開く</div><div class="t" style="left:563.91px;top:257.10px;font-size:14px;color:#ffffff;-webkit-text-stroke:0.2px #ffffff;transform:scaleX(0.7938)">クイック アクセスにピン留めする</div><div class="t" style="left:564.52px;top:289.50px;font-size:14px;color:#ffffff;-webkit-text-stroke:0.2px #ffffff;transform:scaleX(0.9846)">圧縮先...</div><div class="t" style="left:565.50px;top:321.50px;font-size:14px;color:#ffffff;-webkit-text-stroke:0.2px #ffffff;transform:scaleX(0.7373)">パスのコピー</div><div class="t" style="left:564.74px;top:353.50px;font-size:14px;color:#ffffff;-webkit-text-stroke:0.2px #ffffff;transform:scaleX(0.7561)">プロパティ</div><div class="t" style="left:563.90px;top:458.50px;font-size:14px;color:#ffffff;-webkit-text-stroke:0.2px #ffffff;transform:scaleX(0.7981)">ターミナルで開く</div><div class="t" style="left:564.69px;top:499.70px;font-size:14px;color:#ffffff;-webkit-text-stroke:0.2px #ffffff;transform:scaleX(0.8114)">その他のオプションを確認</div><div class="t" style="left:564.91px;top:395.00px;font-size:14px;color:#ffffff;-webkit-text-stroke:0.2px #ffffff;transform:scaleX(0.9920)">Unlock with File Locksmith</div><div class="t" style="left:564.96px;top:426.50px;font-size:14px;color:#ffffff;-webkit-text-stroke:0.2px #ffffff;transform:scaleX(0.9399)">PowerRename で名前を変更</div><div class="t" style="left:770.65px;top:195.50px;font-size:12px;color:#c8c8c8;-webkit-text-stroke:0.2px #c8c8c8;transform:scaleX(0.9500)">Enter</div><div class="t" style="left:771.60px;top:323.00px;font-size:12px;color:#c8c8c8;-webkit-text-stroke:0.2px #c8c8c8;transform:scaleX(1.0062)">Ctrl+Shift+C</div><div class="t" style="left:771.60px;top:355.00px;font-size:12px;color:#c8c8c8;-webkit-text-stroke:0.2px #c8c8c8;transform:scaleX(0.9980)">Alt+Enter</div>
<div class="b" style="left:420px;top:282px;width:107px;height:130px;background:#2c2c2c;border:1px solid #313131;border-radius:7px;box-shadow:0 6px 14px rgba(0,0,0,0.3)"></div><div class="b" style="left:424px;top:287px;width:100.5px;height:27px;background:#383838;border-radius:4px"></div>
<div class="t" style="left:435.30px;top:293.00px;font-size:14px;color:#ffffff;-webkit-text-stroke:0.2px #ffffff;transform:scaleX(0.7716)">ZIP ファイル</div><div class="t" style="left:434.54px;top:325.00px;font-size:14px;color:#ffffff;-webkit-text-stroke:0.2px #ffffff;transform:scaleX(0.7635)">7z ファイル</div><div class="t" style="left:435.30px;top:356.50px;font-size:14px;color:#ffffff;-webkit-text-stroke:0.2px #ffffff;transform:scaleX(0.7690)">TAR ファイル</div><div class="t" style="left:435.30px;top:388.00px;font-size:14px;color:#ffffff;-webkit-text-stroke:0.2px #ffffff;transform:scaleX(0.8103)">追加オプション</div>
<svg class="i" style="left:510.2px;top:298.2px;" width="13" height="20" viewBox="0 0 13 20"><path d="M1 1V15.5L4.6 12.1L7.2 18.2L9.6 17.2L7.1 11.3H12Z" fill="#fff" stroke="#000" stroke-width="1" stroke-linejoin="round"/></svg>
</body></html>
